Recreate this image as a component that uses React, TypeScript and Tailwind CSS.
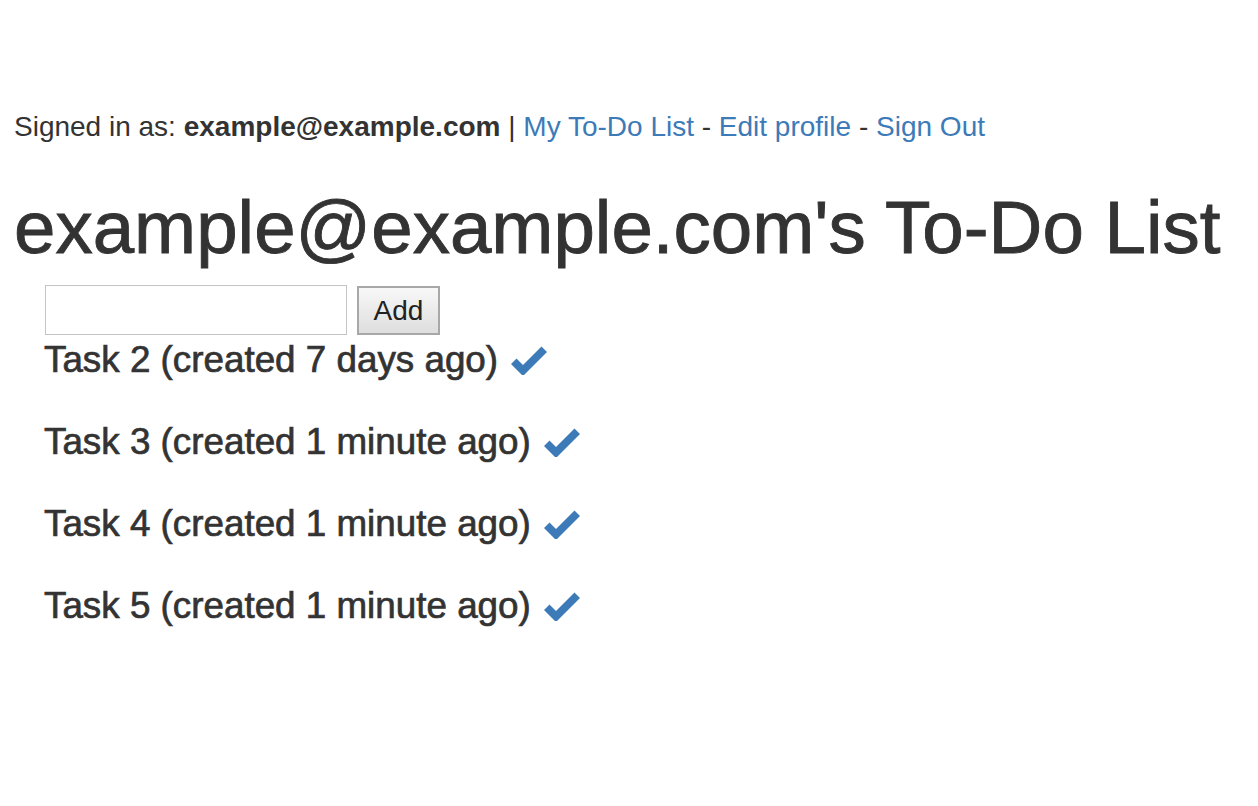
import React, { useState } from "react";

const tasks = [
    { id: 2, label: "Task 2 (created 7 days ago)" },
    { id: 3, label: "Task 3 (created 1 minute ago)" },
    { id: 4, label: "Task 4 (created 1 minute ago)" },
    { id: 5, label: "Task 5 (created 1 minute ago)" },
];

const CheckIcon: React.FC = () => (
    <svg width="36" height="30" viewBox="0 0 36 30" className="inline-block ml-[13px] fill-[#3d7ab8]">
        <polygon points="0,19 5.5,13.5 12,20 30.5,1.5 36,7 12,31" />
    </svg>
);

const App: React.FC = () => {
    const [text, setText] = useState("");

    return (
        <div className="min-h-[806px] bg-white text-[#333] font-['Liberation_Sans',Arial,sans-serif] px-[14px] pt-[107px]">
            <div className="text-[28px] leading-[40px] whitespace-nowrap">
                Signed in as: <b>example@example.com</b> |{" "}
                <a href="#" className="text-[#3d7ab8]">My To-Do List</a> -{" "}
                <a href="#" className="text-[#3d7ab8]">Edit profile</a> -{" "}
                <a href="#" className="text-[#3d7ab8]">Sign Out</a>
            </div>

            <h1 className="mt-[40px] text-[74.5px] leading-[81px] whitespace-nowrap [-webkit-text-stroke:0.9px_#333]">
                example@example.com's To-Do List
            </h1>

            <div className="pl-[30px]">
                <form className="mt-[17px] flex items-start gap-[10px]" onSubmit={(e) => e.preventDefault()}>
                    <input
                        type="text"
                        value={text}
                        onChange={(e) => setText(e.target.value)}
                        className="ml-[1px] w-[302px] h-[50px] border border-[#c4c4c4] bg-white px-2 text-[28px] outline-none"
                    />
                    <button
                        type="submit"
                        className="mt-[1px] w-[83px] h-[49px] border-2 border-[#a8a8a8] bg-gradient-to-b from-[#f8f8f8] to-[#dedede] text-[28px] leading-none text-[#222]"
                    >
                        Add
                    </button>
                </form>

                <ul className="mt-[5px] flex flex-col gap-[42px]">
                    {tasks.map((t) => (
                        <li key={t.id} className="flex items-center text-[36.8px] leading-[40px] whitespace-nowrap [-webkit-text-stroke:0.7px_#333]">
                            <span>{t.label}</span>
                            <CheckIcon />
                        </li>
                    ))}
                </ul>
            </div>
        </div>
    );
};

export default App;
